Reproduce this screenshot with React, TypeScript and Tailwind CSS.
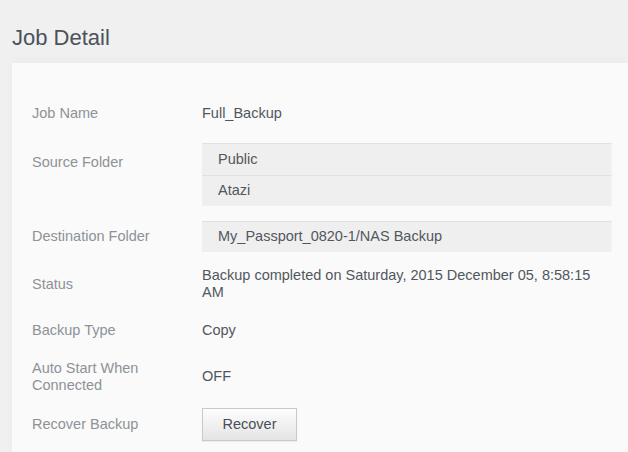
import React from "react";

const Label = ({ children, className = "" }: { children: React.ReactNode; className?: string }) => (
  <div className={`w-[170px] shrink-0 text-[14.5px] leading-[17px] text-[#8d9297] ${className}`}>{children}</div>
);

const BoxRow = ({ children, className = "h-[31px]" }: { children: React.ReactNode; className?: string }) => (
  <div className={`flex ${className} items-center border-t border-[#e1e1e1] border-r border-r-[#f4f4f4] bg-[#efefef] pl-[16px] text-[14.5px] text-[#52575d]`}>
    {children}
  </div>
);

export default function App() {
  return (
    <div
      className="flex h-[452px] w-[628px] flex-col overflow-hidden bg-[#f0f0f0]"
      style={{ fontFamily: '"Liberation Sans", Arial, sans-serif' }}
    >
      <h1 className="pl-[12px] pt-[25px] text-[22px] leading-[26px] text-[#4a525a]">Job Detail</h1>
      <div className="ml-[12px] mt-[12px] flex-1 bg-[#fafafa] pl-[20px] pr-[16px] pt-[36px] shadow-[0_-3px_8px_rgba(0,0,0,0.025)]">
        <div className="flex flex-col">
          <div className="flex h-[29px] items-center">
            <Label>Job Name</Label>
            <div className="text-[14.5px] text-[#52575d]">Full_Backup</div>
          </div>
          <div className="mt-[15px] flex items-start">
            <Label className="mt-[11px]">Source Folder</Label>
            <div className="flex-1">
              <BoxRow className="h-[32px]">Public</BoxRow>
              <BoxRow>Atazi</BoxRow>
            </div>
          </div>
          <div className="mt-[15px] flex items-center">
            <Label>Destination Folder</Label>
            <div className="flex-1">
              <BoxRow>My_Passport_0820-1/NAS Backup</BoxRow>
            </div>
          </div>
          <div className="mt-[15px] flex items-center">
            <Label>Status</Label>
            <div className="w-[400px] text-[14.5px] leading-[17px] text-[#52575d]">
              Backup completed on Saturday, 2015 December 05, 8:58:15 AM
            </div>
          </div>
          <div className="mt-[15px] flex h-[29px] items-center">
            <Label>Backup Type</Label>
            <div className="text-[14.5px] text-[#52575d]">Copy</div>
          </div>
          <div className="mt-[15px] flex items-center">
            <Label>
              Auto Start When
              <br />
              Connected
            </Label>
            <div className="text-[14.5px] text-[#52575d]">OFF</div>
          </div>
          <div className="mt-[14px] flex items-center">
            <Label>Recover Backup</Label>
            <button className="h-[33px] w-[95px] border border-[#c9c9c9] bg-gradient-to-b from-[#fdfdfd] to-[#e4e4e4] text-[14.5px] text-[#4a4f55] shadow-[0_1px_1px_rgba(0,0,0,0.05)]">
              Recover
            </button>
          </div>
        </div>
      </div>
    </div>
  );
}
